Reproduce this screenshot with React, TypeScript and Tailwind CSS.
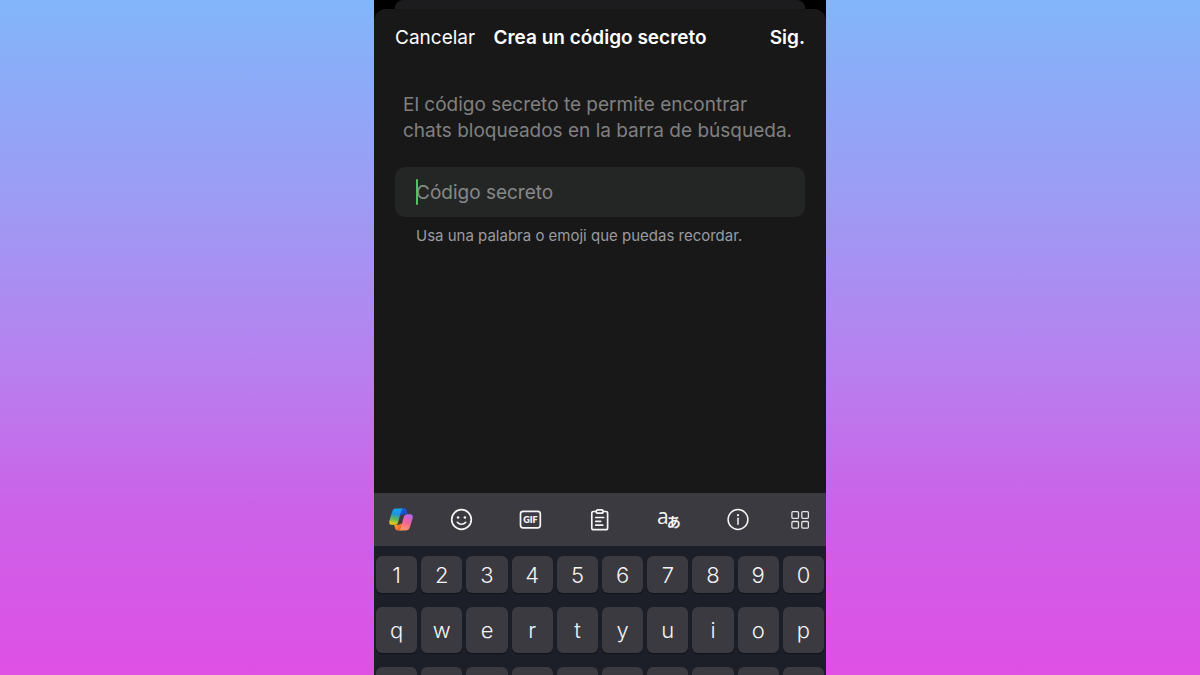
import React, { useState } from "react";

interface KeyProps {
  label: string;
  className: string;
  children?: React.ReactNode;
}

const Key: React.FC<KeyProps> = ({ label, className, children }) => (
  <button
    type="button"
    aria-label={label}
    className={`min-w-0 flex-1 rounded-md bg-[#3b3a41] text-[#f4f4f5] font-light shadow-[0_1px_1px_#12131a] ${className}`}
  >
    {children}
  </button>
);

const CopilotIcon = () => (
  <svg viewBox="0 0 24 24" className="w-6 h-6">
    <defs>
      <linearGradient id="ribbonLeft" x1="0.6" y1="0" x2="0.4" y2="1">
        <stop offset="0" stopColor="#17a8f2" />
        <stop offset="0.35" stopColor="#1f93dc" />
        <stop offset="0.68" stopColor="#62b857" />
        <stop offset="1" stopColor="#f2c918" />
      </linearGradient>
      <linearGradient id="ribbonRight" x1="0.7" y1="0" x2="0.3" y2="1">
        <stop offset="0" stopColor="#b766ee" />
        <stop offset="0.45" stopColor="#f0629f" />
        <stop offset="1" stopColor="#ff9a5c" />
      </linearGradient>
      <linearGradient id="foldTop" x1="0" y1="0" x2="1" y2="1">
        <stop offset="0" stopColor="#1b6ae6" />
        <stop offset="1" stopColor="#1a3fc0" />
      </linearGradient>
      <linearGradient id="foldBottom" x1="0" y1="0" x2="1" y2="0.6">
        <stop offset="0" stopColor="#f7a726" />
        <stop offset="1" stopColor="#f0503f" />
      </linearGradient>
    </defs>
    <path d="M12 .5h3.400c1.500 0 2.200 1 2.600 2.400l.9 3.300h-4.200c-1 0-1.700.3-2.200 1H10z" fill="url(#foldTop)" />
    <path d="M12 22.500H8.600c-1.500 0-2.200-1-2.600-2.400l-.9-3.300h4.200c1 0 1.700-.3 2.200-1H14z" fill="url(#foldBottom)" />
    <path d="M7.500.5h7c-1.400.1-2 1.200-2.500 2.800L9.300 13.900c-.6 2-1.700 2.900-3.600 2.900H3C.6 16.800-.2 15.200.4 12.800l2.700-9.100C3.800 1.500 5.200.5 7.500.5z" fill="url(#ribbonLeft)" />
    <path d="M16.500 22.500h-7c1.400-.1 2-1.200 2.500-2.800l2.700-10.600c.6-2 1.700-2.900 3.600-2.900H21c2.400 0 3.200 1.600 2.600 4l-2.700 9.100c-.7 2.200-2.100 3.200-4.400 3.200z" fill="url(#ribbonRight)" />
  </svg>
);

const EmojiIcon = () => (
  <svg viewBox="0 0 24 24" className="w-6 h-6" fill="none" stroke="#f4f4f5" strokeWidth="1.7" strokeLinecap="round">
    <circle cx="11.500" cy="11.500" r="9.800" />
    <circle cx="8.100" cy="9.500" r="1.300" fill="#f4f4f5" stroke="none" />
    <circle cx="14.900" cy="9.500" r="1.300" fill="#f4f4f5" stroke="none" />
    <path d="M7.300 14.300c2.200 2.600 6.200 2.600 8.400 0" />
  </svg>
);

const GifIcon = () => (
  <svg viewBox="0 0 24 24" className="w-6 h-6">
    <rect x="1.500" y="3.400" width="19.800" height="16.400" rx="2.600" fill="none" stroke="#f4f4f5" strokeWidth="1.700" />
    <text x="11.400" y="14.900" textAnchor="middle" fontSize="9" fontWeight="800" fontFamily="Lato, sans-serif" fill="#f4f4f5">GIF</text>
  </svg>
);

const ClipboardIcon = () => (
  <svg viewBox="0 0 24 24" className="w-6 h-6" fill="none" stroke="#f4f4f5" strokeWidth="1.700" strokeLinecap="round" strokeLinejoin="round">
    <path d="M8.200 3.500H5.500c-1 0-1.700.7-1.700 1.700V20c0 1 .7 1.700 1.700 1.700h12.400c1 0 1.700-.7 1.700-1.700V5.200c0-1-.7-1.700-1.700-1.700h-2.700" />
    <rect x="8.200" y="1.800" width="7" height="3.400" rx="1.700" />
    <path d="M7.700 9.500h8M7.700 13.300h5M7.700 17.200h7" />
  </svg>
);

const InfoIcon = () => (
  <svg viewBox="0 0 24 24" className="w-6 h-6" fill="none" stroke="#f4f4f5" strokeWidth="1.500" strokeLinecap="round">
    <circle cx="12" cy="11.500" r="9.900" />
    <path d="M12 10.300v6" />
    <circle cx="12" cy="7.200" r="1.100" fill="#f4f4f5" stroke="none" />
  </svg>
);

const GridIcon = () => (
  <svg viewBox="0 0 24 24" className="w-6 h-6" fill="none" stroke="#e4e4e7" strokeWidth="1.300">
    <rect x="3.900" y="3.700" width="6.600" height="6.600" rx="1" />
    <rect x="13.800" y="3.700" width="6.600" height="6.600" rx="1" />
    <rect x="3.900" y="13.500" width="6.600" height="6.600" rx="1" />
    <rect x="13.800" y="13.500" width="6.600" height="6.600" rx="1" />
  </svg>
);

const TranslateIcon = () => (
  <svg viewBox="0 0 24 24" className="w-6 h-6 overflow-visible" fill="#f4f4f5">
    <text x="0" y="16" fontSize="21" fontWeight="500" fontFamily="'Open Sans', sans-serif">a</text>
    <text x="9.800" y="18.800" fontSize="14" fontWeight="700" fontFamily="'Noto Sans CJK JP', sans-serif">あ</text>
  </svg>
);

const tools = [
  { label: "Emoji", icon: <EmojiIcon /> },
  { label: "GIF", icon: <GifIcon /> },
  { label: "Portapapeles", icon: <ClipboardIcon /> },
  { label: "Traducir", icon: <TranslateIcon /> },
  { label: "Información", icon: <InfoIcon /> },
];

const numberRow = "1234567890".split("");
const topRow = "qwertyuiop".split("");
const homeRow = "asdfghjklñ".split("");

export default function App() {
  const [code, setCode] = useState("");

  return (
    <div className="h-screen overflow-hidden flex justify-center bg-[linear-gradient(to_bottom,#82b5fa_0%,#9d9bf4_30%,#b87fee_55%,#cb62e8_75%,#df50e4_100%)] font-[Inter,'Liberation_Sans',sans-serif]">
      <div className="w-full max-w-[452px] flex flex-col bg-black">
        <div className="mx-[21px] h-[9px] shrink-0 rounded-t-lg bg-[#1c1c1f]" />

        <main className="flex-1 rounded-t-xl bg-[#181818] px-[21px]">
          <header className="grid grid-cols-[1fr_auto_1fr] items-center pt-4 text-[19px] leading-[26px] text-white">
            <button type="button" className="justify-self-start">Cancelar</button>
            <h1 className="font-semibold">Crea un código secreto</h1>
            <button type="button" className="justify-self-end font-semibold">Sig.</button>
          </header>

          <p className="mt-[41px] pl-2 text-[19px] leading-[26px] text-[#808080]">
            El código secreto te permite encontrar <br />
            chats bloqueados en la barra de búsqueda.
          </p>

          <div className="relative mt-[23px]">
            <input
              id="codigo"
              type="text"
              value={code}
              onChange={(e) => setCode(e.target.value)}
              placeholder="Código secreto"
              aria-label="Código secreto"
              aria-describedby="ayuda"
              className="block w-full h-[50px] rounded-[10px] bg-[#242626] px-[21px] text-[19px] text-white placeholder:text-[#868888] caret-[#4bc465] outline-none"
            />
            <span className="absolute left-[21px] top-3 h-[26px] w-0.5 rounded-full bg-[#4bc465]" />
          </div>
          <p id="ayuda" className="mt-[9px] pl-[21px] text-[15px] leading-5 text-[#9b9b9f]">
            Usa una palabra o emoji que puedas recordar.
          </p>
        </main>

        <div className="shrink-0 h-[53px] flex items-stretch bg-[#3b3a41]">
          <button type="button" aria-label="Copilot" className="w-[53px] flex items-center justify-center">
            <CopilotIcon />
          </button>
          {tools.map((tool) => (
            <button key={tool.label} type="button" aria-label={tool.label} className="flex-1 flex items-center justify-center">
              {tool.icon}
            </button>
          ))}
          <button type="button" aria-label="Más" className="w-[53px] flex items-center justify-center">
            <GridIcon />
          </button>
        </div>

        <div className="shrink-0 h-[129px] overflow-hidden flex flex-col gap-[14px] bg-[#1c1e28] px-0.5 pt-[10px]">
          <div className="flex shrink-0 gap-1">
            {numberRow.map((k) => (
              <Key key={k} label={k} className="h-[37px] text-[22px] leading-none">{k}</Key>
            ))}
          </div>
          <div className="flex shrink-0 gap-1">
            {topRow.map((k) => (
              <Key key={k} label={k} className="h-[46px] text-[22px] leading-none">{k}</Key>
            ))}
          </div>
          <div className="flex shrink-0 gap-1">
            {homeRow.map((k) => (
              <Key key={k} label={k} className="h-[46px]" />
            ))}
          </div>
        </div>
      </div>
    </div>
  );
}
